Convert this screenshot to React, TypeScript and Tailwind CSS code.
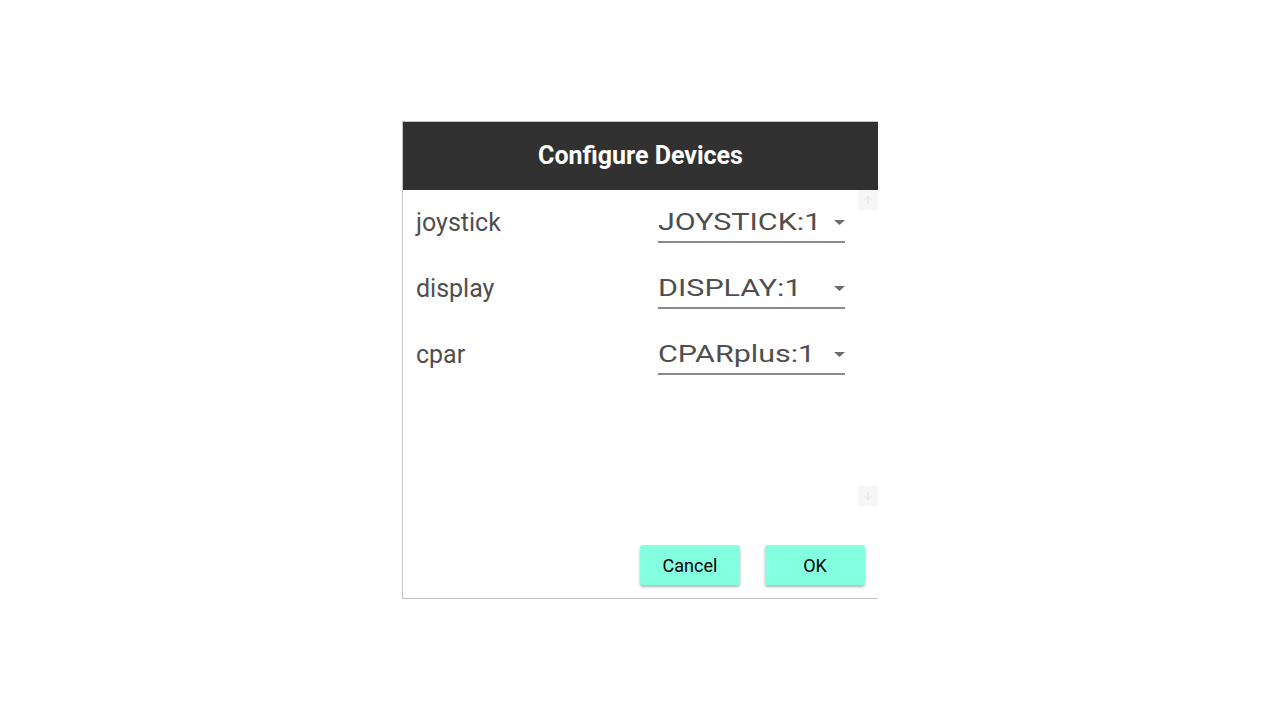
import { ArrowUp, ArrowDown } from "lucide-react";

const devices = [
  { name: "joystick", value: "JOYSTICK:1" },
  { name: "display", value: "DISPLAY:1" },
  { name: "cpar", value: "CPARplus:1" },
];

function DeviceRow({ name, value }: { name: string; value: string }) {
  return (
    <div className="flex h-[66px] items-center">
      <div className="w-[242px] text-[25px] text-[#4f4f4f]">{name}</div>
      <div className="flex h-[40px] w-[187px] items-center justify-between border-b-2 border-[#8a8a8a]">
        <span className="origin-left scale-x-[1.27] text-[24px] text-[#4f4f4f]">{value}</span>
        <svg width="11" height="5" viewBox="0 0 11 5">
          <path d="M0 0 L11 0 L5.5 5 Z" fill="#6b6b6b" />
        </svg>
      </div>
    </div>
  );
}

export default function App() {
  return (
    <div
      className="flex h-[720px] w-[1280px] items-start justify-center bg-white pt-[121px]"
      style={{ fontFamily: "Roboto, 'Liberation Sans', sans-serif" }}
    >
      <div className="flex h-[478px] w-[476px] flex-col border-t border-b border-l border-[#c4c4c4] bg-white">
        <div className="flex h-[68px] items-center justify-center bg-[#313131]">
          <h1 className="text-[25px] font-bold text-white">Configure Devices</h1>
        </div>

        <div className="flex h-[316px]">
          <div className="flex-1 pl-[13px]">
            {devices.map((d) => (
              <DeviceRow key={d.name} name={d.name} value={d.value} />
            ))}
          </div>
          <div className="flex w-[20px] flex-col justify-between">
            <div className="flex h-[20px] items-center justify-center bg-[#f7f7f7]">
              <ArrowUp className="h-3 w-3 text-[#d6d6d6]" strokeWidth={1.5} />
            </div>
            <div className="flex h-[20px] items-center justify-center bg-[#f7f7f7]">
              <ArrowDown className="h-3 w-3 text-[#d6d6d6]" strokeWidth={1.5} />
            </div>
          </div>
        </div>

        <div className="flex flex-1 items-end justify-end gap-[25px] pb-[13px] pr-[13px]">
          <button className="h-[40px] w-[100px] rounded-[3px] bg-[#84ffdf] text-[18px] text-black shadow-[0_2px_3px_rgba(0,0,0,0.3)]">
            Cancel
          </button>
          <button className="h-[40px] w-[100px] rounded-[3px] bg-[#84ffdf] text-[18px] text-black shadow-[0_2px_3px_rgba(0,0,0,0.3)]">
            OK
          </button>
        </div>
      </div>
    </div>
  );
}
